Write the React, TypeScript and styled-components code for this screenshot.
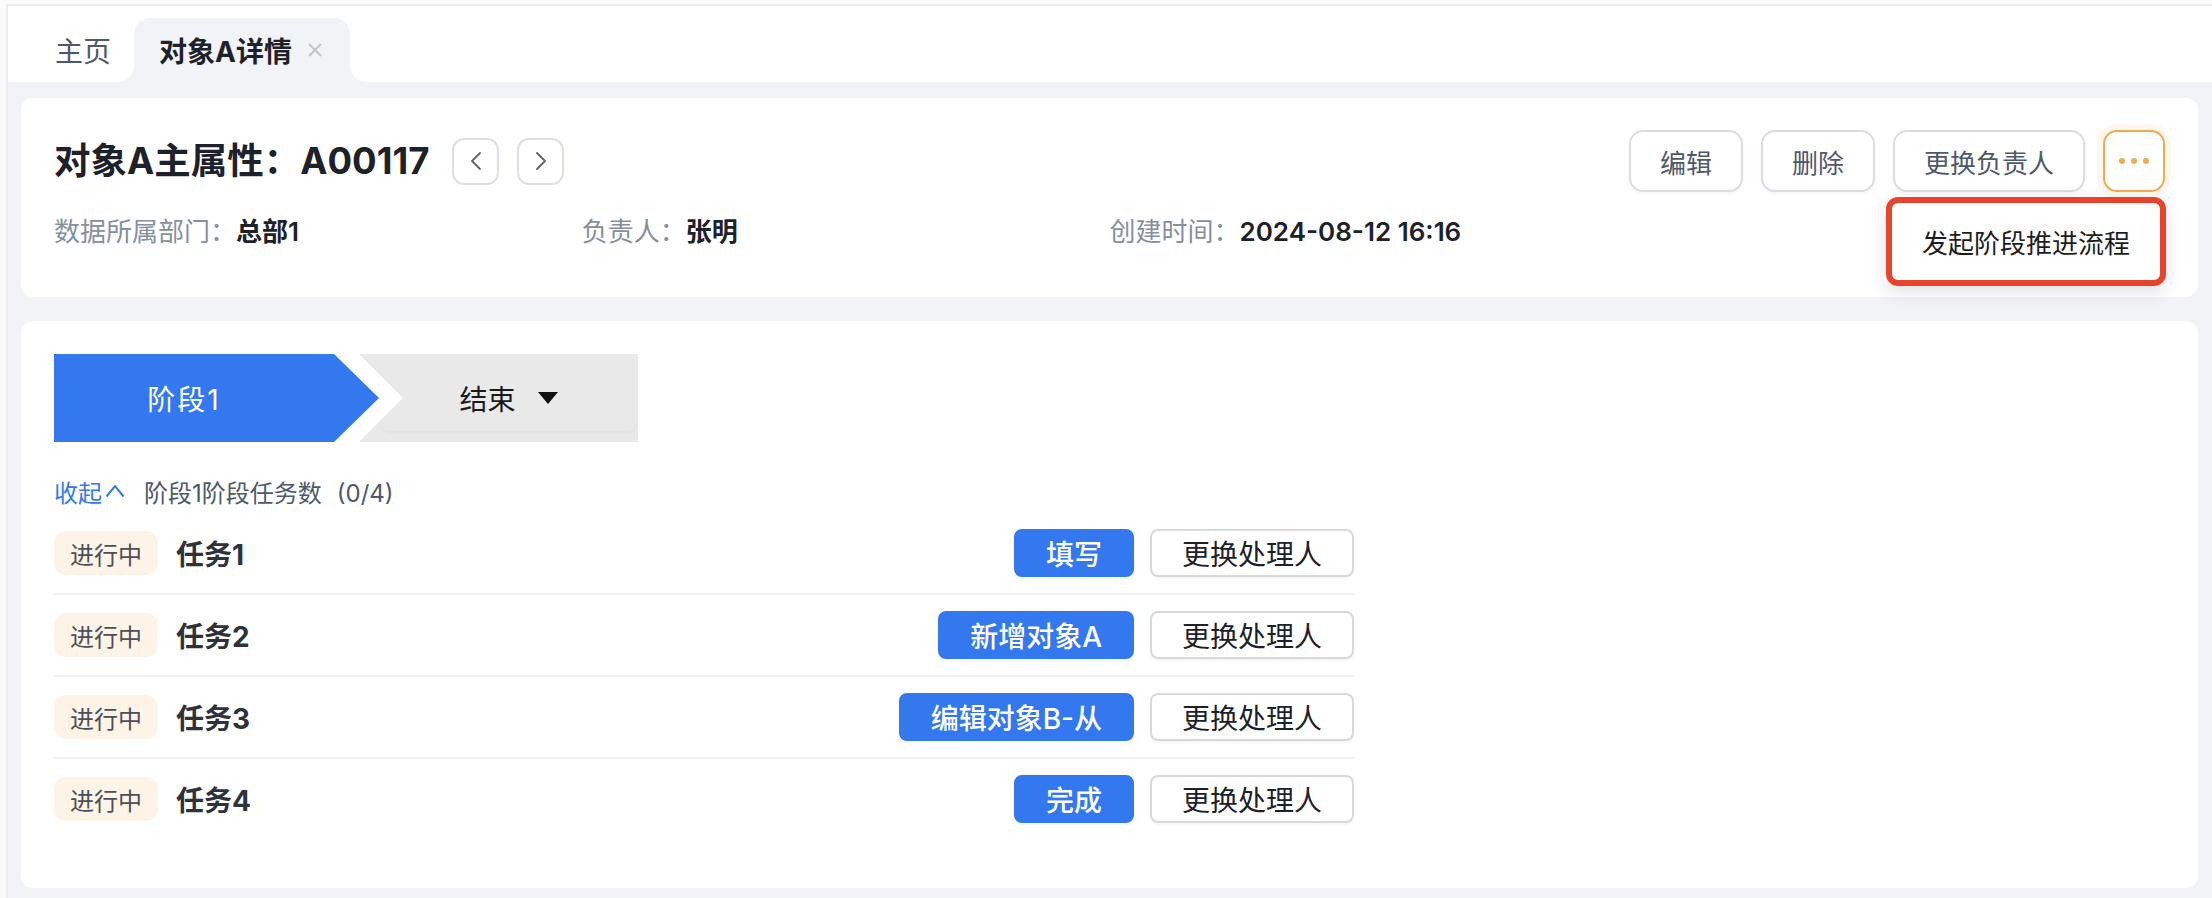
import React from 'react';
import styled, { createGlobalStyle } from 'styled-components';

const GlobalStyle = createGlobalStyle`
  html, body { margin: 0; padding: 0; }
  body {
    background: #fbfbfc;
    font-family: Inter, "Noto Sans CJK SC", sans-serif;
    color: #1d2129;
  }
  * { box-sizing: border-box; }
`;

const PAGE_BG = '#f2f3f7';
const BLUE = '#3478f0';

const Shell = styled.div`
  min-height: 898px;
  padding: 4px 0 0 6px;
  display: flex;
  flex-direction: column;
`;

const Frame = styled.div`
  flex: 1;
  display: flex;
  flex-direction: column;
  background: ${PAGE_BG};
  border-top: 2px solid #ececef;
  border-left: 2px solid #ececef;
`;

const TabBar = styled.div`
  height: 76px;
  background: #fff;
  display: flex;
  align-items: flex-end;
  padding-left: 24px;
`;

const Tab = styled.div`
  height: 64px;
  padding: 0 23px;
  display: flex;
  align-items: center;
  font-size: 28px;
  color: #4e5969;
`;

const ActiveTab = styled.div`
  position: relative;
  height: 64px;
  padding: 0 28px 0 25px;
  display: flex;
  align-items: center;
  gap: 16px;
  background: ${PAGE_BG};
  border-radius: 16px 16px 0 0;
  font-size: 28px;
  font-weight: 700;
  color: #1d2129;

  &::before,
  &::after {
    content: '';
    position: absolute;
    bottom: 0;
    width: 16px;
    height: 16px;
  }
  &::before {
    left: -16px;
    background: radial-gradient(circle at 0 0, transparent 15.5px, ${PAGE_BG} 16px);
  }
  &::after {
    right: -16px;
    background: radial-gradient(circle at 100% 0, transparent 15.5px, ${PAGE_BG} 16px);
  }
`;

const Content = styled.div`
  padding: 16px 14px 9px 13px;
  display: flex;
  flex-direction: column;
  gap: 24px;
`;

const Card = styled.div`
  background: #fff;
  border-radius: 12px;
`;

const HeaderCard = styled(Card)`
  padding: 32px 33px 48px;
  display: flex;
  flex-direction: column;
  gap: 23px;
`;

const TopRow = styled.div`
  height: 62px;
  display: flex;
  align-items: center;
  justify-content: space-between;
`;

const TitleGroup = styled.div`
  display: flex;
  align-items: center;
  gap: 18px;
`;

const Title = styled.h1`
  margin: 0 5px 0 0;
  font-size: 36.5px;
  font-weight: 700;
  line-height: 1;
  color: #1d2129;
`;

const NavButton = styled.button`
  width: 47px;
  height: 47px;
  padding: 0;
  border: 2px solid #dcdfe6;
  border-radius: 12px;
  background: #fff;
  display: flex;
  align-items: center;
  justify-content: center;
`;

const Actions = styled.div`
  display: flex;
  align-items: center;
  gap: 18px;
`;

const ActionButton = styled.button`
  height: 62px;
  padding: 0 29px;
  border: 2px solid #dcdde3;
  border-radius: 14px;
  background: #fff;
  font-family: inherit;
  font-size: 26px;
  color: #4e5969;
  box-shadow: 0 2px 4px rgba(0, 0, 0, 0.04);
`;

const MoreWrap = styled.div`
  position: relative;
`;

const MoreButton = styled.button`
  width: 62px;
  height: 62px;
  padding: 0;
  border: 2px solid #f5ab4c;
  border-radius: 14px;
  background: #fff;
  box-shadow: 0 0 0 6px #fef8f1;
  display: flex;
  align-items: center;
  justify-content: center;
  gap: 6px;
`;

const Dot = styled.span`
  width: 6px;
  height: 6px;
  border-radius: 50%;
  background: #f5ab4c;
`;

const Menu = styled.div`
  position: absolute;
  top: calc(100% + 5px);
  right: -1px;
  background: #fff;
  border-radius: 12px;
  box-shadow: 0 6px 18px rgba(0, 0, 0, 0.12);
  z-index: 10;
`;

const MenuItem = styled.div`
  height: 89px;
  padding: 0 30px;
  border: 6px solid #e8432c;
  border-radius: 12px;
  display: flex;
  align-items: center;
  white-space: nowrap;
  font-size: 26px;
  color: #1d1d1f;
`;

const InfoGrid = styled.div`
  display: grid;
  grid-template-columns: repeat(4, 1fr);
  font-size: 26px;
  line-height: 34px;
`;

const InfoItem = styled.div`
  display: flex;
  white-space: nowrap;
`;

const InfoLabel = styled.span`
  color: #86909c;
`;

const InfoValue = styled.span`
  color: #1d2129;
  font-weight: 600;
`;

const StageCard = styled(Card)`
  padding: 33px 33px 49px;
`;

const StageBar = styled.div`
  height: 88px;
  display: flex;
`;

const StageActive = styled.div`
  width: 325px;
  background: ${BLUE};
  clip-path: polygon(0 0, 280px 0, 100% 50%, 280px 100%, 0 100%);
  display: flex;
  align-items: center;
  justify-content: center;
  padding-right: 65px;
  color: #fff;
  font-size: 28px;
  letter-spacing: 2px;
`;

const StageNext = styled.div`
  width: 279px;
  margin-left: -20px;
  background: #e9e9e9;
  clip-path: polygon(0 0, 100% 0, 100% 100%, 0 100%, 44px 50%);
  padding: 0 1px 11px 21px;
  display: flex;
`;

const StageSelect = styled.div`
  flex: 1;
  border-radius: 10px;
  box-shadow: 0 2px 2px rgba(0, 0, 0, 0.03);
  display: flex;
  align-items: center;
  justify-content: center;
  gap: 22px;
  padding-top: 11px;
  font-size: 28px;
  color: #1a1a1a;
`;

const Summary = styled.div`
  margin: 31px 0 4px;
  height: 36px;
  display: flex;
  align-items: center;
  font-size: 24px;
`;

const Collapse = styled.span`
  display: flex;
  align-items: center;
  gap: 3px;
  color: ${BLUE};
`;

const Count = styled.span`
  margin-left: 19px;
  color: #4e5969;
`;

const CountNumber = styled.span`
  margin-left: 15px;
`;

const TaskList = styled.div`
  width: 1300px;
  display: flex;
  flex-direction: column;
`;

const TaskRow = styled.div`
  height: 82px;
  display: flex;
  align-items: center;
  border-bottom: 2px solid #f0f1f3;

  &:last-child {
    height: 80px;
    border-bottom: none;
  }
`;

const Badge = styled.span`
  height: 44px;
  padding: 0 16px;
  border-radius: 12px;
  background: #fdf3e7;
  display: flex;
  align-items: center;
  font-size: 24px;
  color: #4a4f59;
`;

const TaskName = styled.span`
  flex: 1;
  margin-left: 18px;
  font-size: 28px;
  font-weight: 700;
  color: #2f3239;
`;

const RowButtons = styled.div`
  display: flex;
  gap: 16px;
`;

const TaskButton = styled.button<{ $primary?: boolean }>`
  height: 48px;
  padding: 0 30px;
  border-radius: 8px;
  border: 2px solid ${(p) => (p.$primary ? BLUE : '#d9d9db')};
  background: ${(p) => (p.$primary ? BLUE : '#fff')};
  color: ${(p) => (p.$primary ? '#fff' : '#1d2129')};
  font-family: inherit;
  font-size: 28px;
  font-weight: ${(p) => (p.$primary ? 500 : 400)};
  white-space: nowrap;
  box-shadow: 0 2px 3px rgba(0, 0, 0, 0.04);
`;

const CloseIcon = () => (
  <svg width="14" height="14" viewBox="0 0 14 14">
    <path d="M1 1 L13 13 M13 1 L1 13" stroke="#c0c4cc" strokeWidth="1.8" fill="none" />
  </svg>
);

const Chevron = ({ dir }: { dir: 'left' | 'right' }) => (
  <svg width="12" height="20" viewBox="0 0 12 20">
    <polyline
      points={dir === 'left' ? '10,2 2,10 10,18' : '2,2 10,10 2,18'}
      fill="none"
      stroke="#606266"
      strokeWidth="1.8"
      strokeLinecap="round"
      strokeLinejoin="round"
    />
  </svg>
);

const ChevronUp = () => (
  <svg width="20" height="14" viewBox="0 0 20 14">
    <polyline points="1.5,12.5 10,2 18.5,12.5" fill="none" stroke={BLUE} strokeWidth="2" />
  </svg>
);

const Caret = () => (
  <svg width="20" height="12" viewBox="0 0 20 12">
    <polygon points="0,0 20,0 10,12" fill="#111" />
  </svg>
);

const tasks = [
  { name: '任务1', action: '填写' },
  { name: '任务2', action: '新增对象A' },
  { name: '任务3', action: '编辑对象B-从' },
  { name: '任务4', action: '完成' },
];

export default function App() {
  return (
    <>
      <GlobalStyle />
      <Shell>
        <Frame>
          <TabBar>
            <Tab>主页</Tab>
            <ActiveTab>
              对象A详情
              <CloseIcon />
            </ActiveTab>
          </TabBar>
          <Content>
            <HeaderCard>
              <TopRow>
                <TitleGroup>
                  <Title>对象A主属性：A00117</Title>
                  <NavButton>
                    <Chevron dir="left" />
                  </NavButton>
                  <NavButton>
                    <Chevron dir="right" />
                  </NavButton>
                </TitleGroup>
                <Actions>
                  <ActionButton>编辑</ActionButton>
                  <ActionButton>删除</ActionButton>
                  <ActionButton>更换负责人</ActionButton>
                  <MoreWrap>
                    <MoreButton>
                      <Dot />
                      <Dot />
                      <Dot />
                    </MoreButton>
                    <Menu>
                      <MenuItem>发起阶段推进流程</MenuItem>
                    </Menu>
                  </MoreWrap>
                </Actions>
              </TopRow>
              <InfoGrid>
                <InfoItem>
                  <InfoLabel>数据所属部门：</InfoLabel>
                  <InfoValue>总部1</InfoValue>
                </InfoItem>
                <InfoItem>
                  <InfoLabel>负责人：</InfoLabel>
                  <InfoValue>张明</InfoValue>
                </InfoItem>
                <InfoItem>
                  <InfoLabel>创建时间：</InfoLabel>
                  <InfoValue>2024-08-12 16:16</InfoValue>
                </InfoItem>
              </InfoGrid>
            </HeaderCard>

            <StageCard>
              <StageBar>
                <StageActive>阶段1</StageActive>
                <StageNext>
                  <StageSelect>
                    结束
                    <Caret />
                  </StageSelect>
                </StageNext>
              </StageBar>
              <Summary>
                <Collapse>
                  收起
                  <ChevronUp />
                </Collapse>
                <Count>
                  阶段1阶段任务数
                  <CountNumber>(0/4)</CountNumber>
                </Count>
              </Summary>
              <TaskList>
                {tasks.map((t) => (
                  <TaskRow key={t.name}>
                    <Badge>进行中</Badge>
                    <TaskName>{t.name}</TaskName>
                    <RowButtons>
                      <TaskButton $primary>{t.action}</TaskButton>
                      <TaskButton>更换处理人</TaskButton>
                    </RowButtons>
                  </TaskRow>
                ))}
              </TaskList>
            </StageCard>
          </Content>
        </Frame>
      </Shell>
    </>
  );
}
